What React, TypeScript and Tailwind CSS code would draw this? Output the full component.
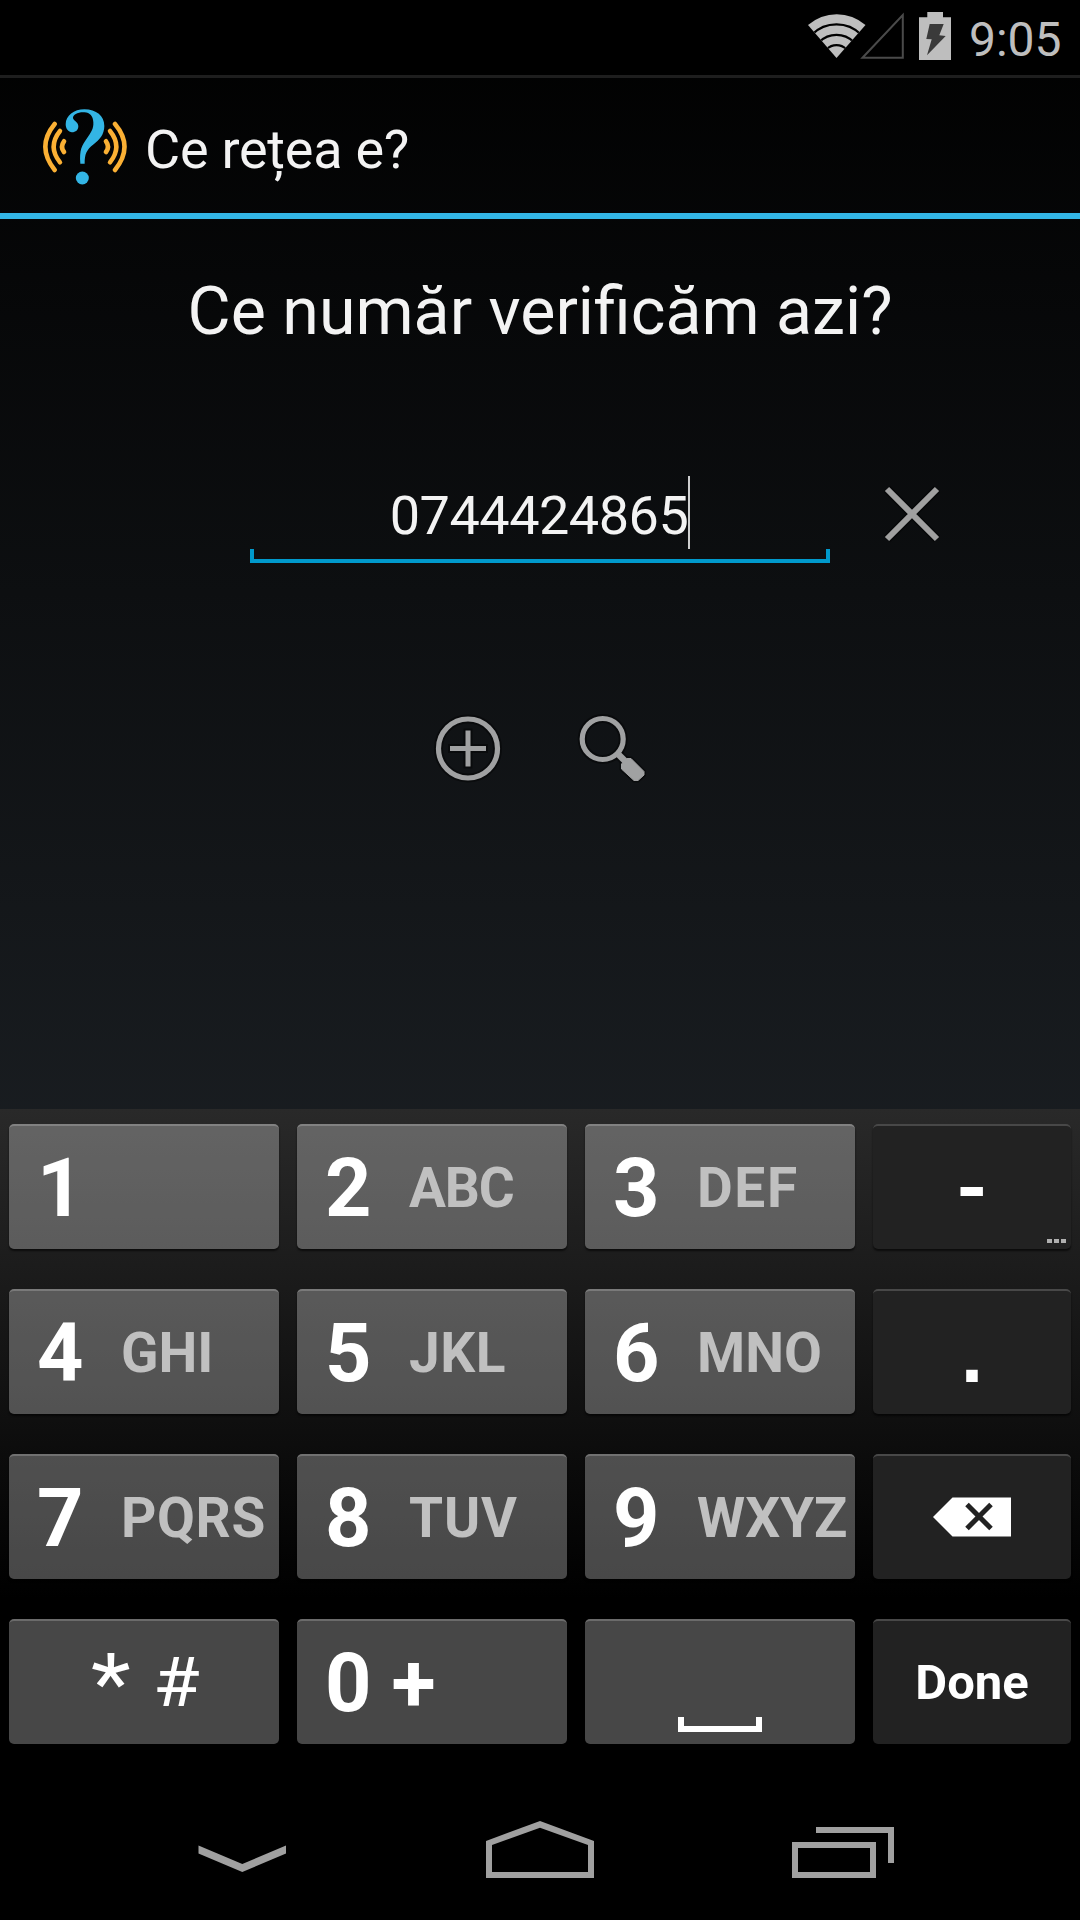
import React from 'react';

function StatusBar() {
  return (
    <header className="flex h-[78px] shrink-0 justify-end gap-[9px] border-b-3 border-[#1e1e1e] bg-black pr-[19px]">
      <svg width="160" height="75" viewBox="800 0 160 75" className="block shrink-0">
        <clipPath id="wifi-fan">
          <path d="M836.5 58 L808 25 A43.500 43.500 0 0 1 865.500 25 Z" />
        </clipPath>
        <g clipPath="url(#wifi-fan)">
          <rect x="800" y="0" width="72" height="60" fill="#bebebe" />
          <g fill="none" stroke="#000" strokeWidth="2.2">
            <circle cx="836.5" cy="59" r="34.700" />
            <circle cx="836.5" cy="59" r="24.200" />
            <circle cx="836.5" cy="59" r="13.800" />
          </g>
        </g>
        <path d="M862.500 57.700 L902.800 15 V57.700 Z" fill="none" stroke="#4a4a4a" strokeWidth="2" />
        <path d="M919 17.300 H927.300 V12 H943 V17.300 H951 V60 H919 Z" fill="#bebebe" />
        <path d="M929.700 24 H943.700 L939.300 35.300 L945.700 36 L927 55.300 L931.700 39.300 L926.300 39 Z" fill="#3a3a3a" />
      </svg>
      <span className="w-[92px] pt-[2px] text-[48px] leading-[75px] text-[#bebebe]">9:05</span>
    </header>
  );
}

function AppIcon() {
  return (
    <svg width="96" height="92" viewBox="0 0 288 276" className="mt-[22px] block shrink-0">
      <g fill="none" stroke="#fbb034" strokeWidth="13.5" strokeLinecap="round">
        <path d="M50 72 Q-6 140 50 210" />
        <path d="M66 93 Q28 140 66 187" />
        <path d="M78 124 Q66 140 78 156" strokeWidth="14" />
        <path d="M231 72 Q288 140 231 210" />
        <path d="M216 93 Q254 140 216 187" />
        <path d="M204 124 Q216 140 204 156" strokeWidth="14" />
      </g>
      <g fill="#33b5e5">
        <path d="M127 191 C124 150 131 137 147 115 C160 96 167 86 166 67 C165 48 156 38 139 37 C119 36 105 44 105 54 C106 62 121 66 121 79 C121 90 113 97 102 97 C91 97 83 86 83 73 C83 47 108 28 139 28 C175 28 199 48 199 78 C199 104 184 119 167 133 C145 150 140 163 140 191 Z" />
        <circle cx="133" cy="234" r="19.500" />
      </g>
    </svg>
  );
}

const keyClass = 'flex h-[125px] items-center rounded-[5px] border-t-2 border-white/20 bg-white/28 shadow-[0_2px_2px_rgba(0,0,0,0.6)]';

function Key({ digit, letters, tracking = '' }: { digit: string; letters?: string; tracking?: string }) {
  return (
    <button className={`${keyClass} pt-[2px] pl-[28px]`}>
      <span className="w-[84px] shrink-0 text-left text-[81px] leading-none font-bold whitespace-nowrap text-white">{digit}</span>
      {letters && (
        <span className={`text-[55px] leading-none font-bold whitespace-nowrap text-[#c0c0c0] ${tracking}`}>{letters}</span>
      )}
    </button>
  );
}

function PlainKey({ children }: { children: React.ReactNode }) {
  return <button className={`${keyClass} justify-center`}>{children}</button>;
}

function FnKey({ children }: { children: React.ReactNode }) {
  return (
    <button className="relative flex h-[125px] items-center justify-center rounded-[5px] border-t-2 border-[#484848] bg-[#222222] shadow-[0_2px_2px_rgba(0,0,0,0.6)]">
      {children}
    </button>
  );
}

function Keypad() {
  return (
    <section className="grid h-[667px] shrink-0 grid-cols-[270px_270px_270px_198px] content-start gap-x-[18px] gap-y-[40px] bg-[linear-gradient(to_bottom,#292929_0px,#000000_490px)] px-[9px] pt-[15px]">
      <Key digit="1" />
      <Key digit="2" letters="ABC" tracking="tracking-[-1.2px]" />
      <Key digit="3" letters="DEF" tracking="tracking-[1.6px]" />
      <FnKey>
        <span className="pt-[1px] text-[81px] leading-none font-bold">-</span>
        <span className="absolute right-[5px] bottom-[6px] flex gap-[2px]">
          <i className="h-[4px] w-[5px] bg-[#b0b0b0]" />
          <i className="h-[4px] w-[5px] bg-[#b0b0b0]" />
          <i className="h-[4px] w-[5px] bg-[#b0b0b0]" />
        </span>
      </FnKey>
      <Key digit="4" letters="GHI" />
      <Key digit="5" letters="JKL" tracking="tracking-[0.5px]" />
      <Key digit="6" letters="MNO" />
      <FnKey>
        <span className="pt-[3px] font-['Liberation_Sans',sans-serif] text-[81px] leading-none font-bold">.</span>
      </FnKey>
      <Key digit="7" letters="PQRS" tracking="tracking-[0.6px]" />
      <Key digit="8" letters="TUV" tracking="tracking-[0.8px]" />
      <Key digit="9" letters="WXYZ" />
      <FnKey>
        <svg width="80" height="40" viewBox="0 0 80 40" className="-mt-[1px] block">
          <path d="M1 20 L20.500 0.500 H79 V39.500 H20.500 Z" fill="#fff" />
          <path d="M35 7.500 L59 31.500 M59 7.500 L35 31.500" stroke="#222" strokeWidth="5" />
        </svg>
      </FnKey>
      <PlainKey>
        <span className="flex items-center gap-[24px] leading-none">
          <span className="scale-y-90 pt-[4px] text-[92px]">*</span>
          <span className="scale-x-110 text-[69px]">#</span>
        </span>
      </PlainKey>
      <Key digit="0 +" />
      <PlainKey>
        <span className="mt-[84px] h-[15px] w-[84px] border-x-6 border-b-6 border-white" />
      </PlainKey>
      <FnKey>
        <span className="text-[49px] leading-none font-bold">Done</span>
      </FnKey>
    </section>
  );
}

function NavBar() {
  return (
    <nav className="flex h-[144px] shrink-0 bg-black pl-[198px]">
      <svg width="88" height="144" viewBox="198 1776 88 144" className="block">
        <path d="M198.500 1845.500 L242.300 1864 L286 1845.500 V1853.500 L242.300 1872 L198.500 1853.500 Z" fill="#a0a0a0" />
      </svg>
      <svg width="108" height="144" viewBox="486 1776 108 144" className="ml-[200px] block">
        <path d="M486 1841 L540 1821 L594 1841 V1878 H486 Z M492 1845 V1872 H588 V1845 L540 1827.700 Z" fill="#a0a0a0" fillRule="evenodd" />
      </svg>
      <svg width="102" height="144" viewBox="792 1776 102 144" className="ml-[198px] block">
        <path d="M792 1842 H876 V1878 H792 Z M798 1848 V1872 H870 V1848 Z" fill="#a0a0a0" fillRule="evenodd" />
        <path d="M816 1827 H894 V1863 H888 V1833 H816 Z" fill="#a0a0a0" />
      </svg>
    </nav>
  );
}

export default function App() {
  return (
    <div className="flex h-[1920px] w-[1080px] flex-col overflow-hidden bg-[linear-gradient(to_bottom,#000000_0px,#272d33_1776px)] font-['Roboto',sans-serif] text-white">
      <StatusBar />
      <div className="flex h-[141px] shrink-0 gap-[11px] border-b-6 border-[#33b5e5] pl-[38px]">
        <AppIcon />
        <h1 className="pt-[4px] text-[54px] leading-[135px] tracking-[-0.25px] text-[#f3f3f3]">Ce rețea e?</h1>
      </div>
      <main className="flex h-[890px] shrink-0 flex-col">
        <h2 className="mt-[53px] text-center text-[66.300px] leading-[78px] text-[#f3f3f3]">Ce număr verificăm azi?</h2>
        <div className="mt-[126px] flex h-[87px] items-start pl-[250px]">
          <div className="w-[580px]">
            <div className="flex h-[73px] justify-center">
              <span className="h-[73px] border-r-2 border-white/80 text-[54px] leading-[79px] tracking-[-0.5px] text-[#f3f3f3]">0744424865</span>
            </div>
            <div className="h-[14px] border-x-4 border-b-4 border-[#0099cc]" />
          </div>
          <svg width="64" height="64" viewBox="0 0 64 64" className="mt-[6px] ml-[50px] block">
            <path d="M7 7 L57 57 M57 7 L7 57" stroke="#000" strokeOpacity="0.35" strokeWidth="9" />
            <path d="M7 7 L57 57 M57 7 L7 57" stroke="#a0a0a0" strokeWidth="6" />
          </svg>
        </div>
        <div className="mt-[143px] flex justify-center gap-[60px]">
          <svg width="84" height="84" viewBox="0 0 84 84" className="block">
            <g fill="none" stroke="#000" strokeOpacity="0.4" strokeWidth="9">
              <circle cx="42" cy="42.500" r="29.500" />
              <path d="M22 42.500 H62 M42 22.500 V62.500" />
            </g>
            <g fill="none" stroke="#a0a1a2" strokeWidth="5.200">
              <circle cx="42" cy="42.500" r="29.500" />
              <path d="M24 42.500 H60 M42 24.500 V60.500" strokeWidth="5" />
            </g>
          </svg>
          <svg width="84" height="84" viewBox="0 0 84 84" className="block">
            <g fill="none" stroke="#000" strokeOpacity="0.4">
              <circle cx="32.700" cy="33" r="20.500" strokeWidth="9" />
              <path d="M47 47 L54 54" strokeWidth="10" />
              <path d="M51.500 63 V58 L57 52.500 H61 L74 65.500 V69 L68 74.500 H64 Z" strokeWidth="4" />
            </g>
            <circle cx="32.700" cy="33" r="20.500" fill="none" stroke="#a0a1a2" strokeWidth="5.200" />
            <path d="M47.500 47.500 L57 57" stroke="#a0a1a2" strokeWidth="6.500" />
            <path d="M51.500 63 V58 L57 52.500 H61 L74 65.500 V69 L68 74.500 H64 Z" fill="#a0a1a2" stroke="#a0a1a2" strokeWidth="1" strokeLinejoin="round" />
          </svg>
        </div>
      </main>
      <Keypad />
      <NavBar />
    </div>
  );
}
